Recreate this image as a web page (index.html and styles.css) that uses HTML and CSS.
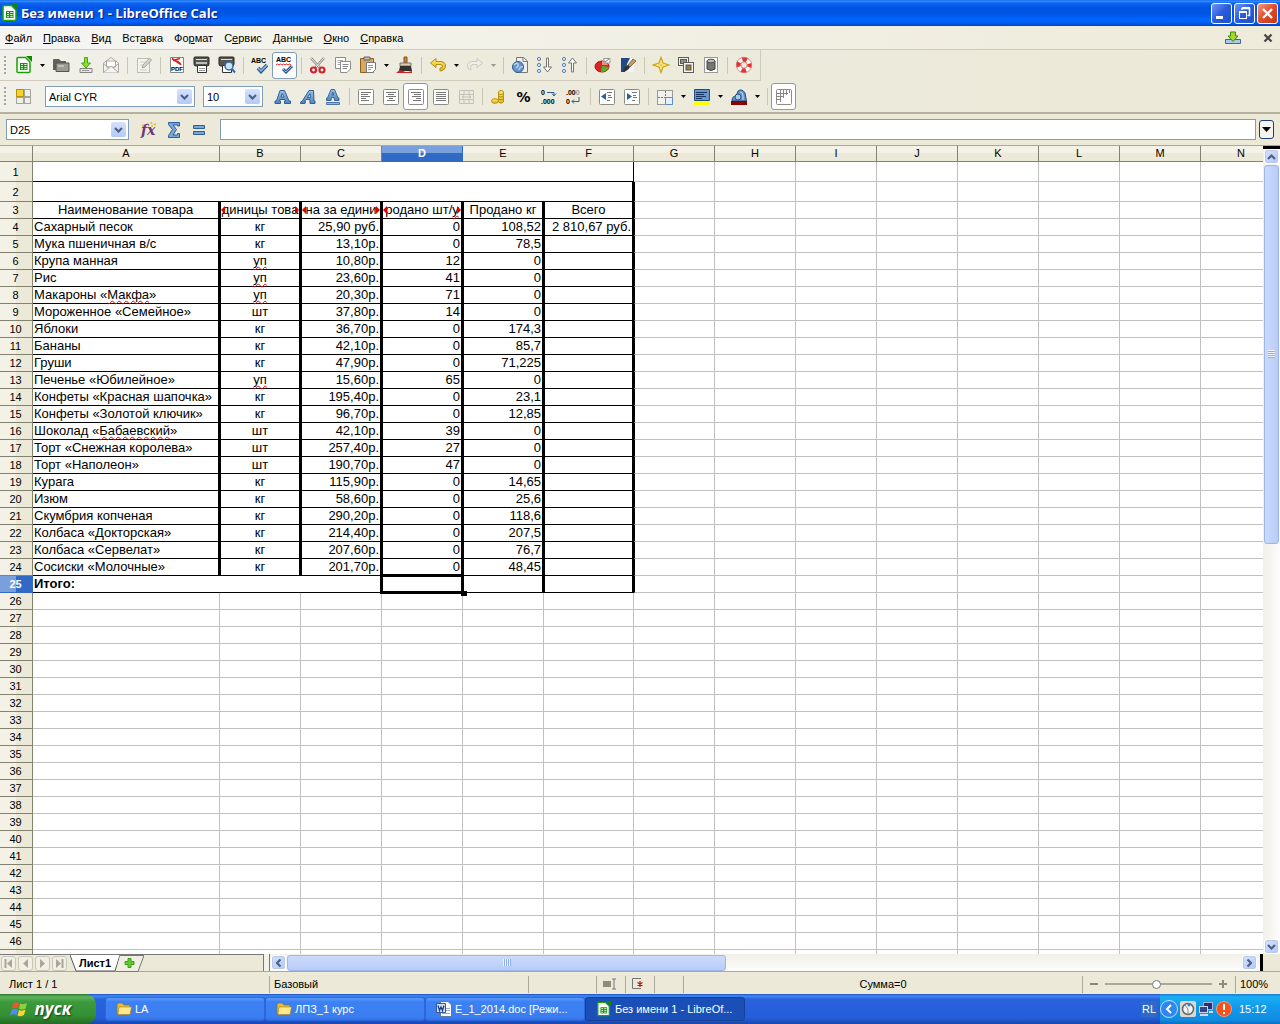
FILE: index.html
```html
<!DOCTYPE html>
<html lang="ru">
<head>
<meta charset="utf-8">
<title>Без имени 1 - LibreOffice Calc</title>
<link rel="stylesheet" href="styles.css">
</head>
<body>
<svg class="defs" aria-hidden="true">
  <defs>
    <linearGradient id="blueA" x1="0" y1="0" x2="0" y2="1"><stop offset="0" stop-color="#9dc0e4"/><stop offset="1" stop-color="#4f86bf"/></linearGradient>
    <linearGradient id="gold" x1="0" y1="0" x2="0" y2="1"><stop offset="0" stop-color="#ffeb6b"/><stop offset="1" stop-color="#e0b41c"/></linearGradient>
    <symbol id="calc" viewBox="0 0 18 18">
      <path d="M3 1.500H10.500L15 6V15.500Q15 16.500 14 16.500H3Q2 16.500 2 15.500V2.500Q2 1.500 3 1.500Z" fill="#fff" stroke="#18a303" stroke-width="1.500"/>
      <path d="M11 0H17V6Z" fill="#0f8a00"/>
      <path d="M5 7H12.500V14H5Z" fill="#18920a"/>
      <path d="M6 8.500H8M9.200 8.500H11.700M6 10.600H8M9.200 10.600H11.700M6 12.700H8M9.200 12.700H11.700" stroke="#e4f7df" stroke-width="1"/>
    </symbol>
    <symbol id="folder" viewBox="0 0 16 14">
      <path d="M1 3Q1 1 3 1H6L8 3H13Q14 3 14 4V12H2Q1 12 1 11Z" fill="#e8b93a" stroke="#8c6a12" stroke-width=".6"/>
      <path d="M3 5H15.500L14 12.500H2Z" fill="#ffe88a" stroke="#a8821c" stroke-width=".6"/>
    </symbol>
    <symbol id="caret" viewBox="0 0 5 3"><path d="M0 0H5L2.500 3Z"/></symbol>
    <symbol id="chev" viewBox="0 0 9 6"><path d="M1 1L4.500 4.500L8 1" fill="none" stroke="#4d6185" stroke-width="2.200"/></symbol>
    <symbol id="page" viewBox="0 0 18 18"><rect x="1.500" y="1.500" width="15" height="15" rx="1" fill="#fff" stroke="#8d8d88"/></symbol>
  </defs>
</svg>

<header class="titlebar">
  <svg class="app-icon" width="18" height="18"><use href="#calc"/></svg>
  <h1>Без имени 1 - LibreOffice Calc</h1>
  <div class="win-buttons">
    <button class="win" aria-label="Свернуть"><svg width="19" height="19"><path d="M4 13.500H11" stroke="#fff" stroke-width="3"/></svg></button>
    <button class="win" aria-label="Восстановить"><svg width="19" height="19" fill="none" stroke="#fff"><path d="M7 6V4.500H14.500V11.500H12.500" stroke-width="1.500"/><path d="M7 4H15" stroke-width="2"/><rect x="4.500" y="8" width="7" height="6.500"/><path d="M4 8H12" stroke-width="2"/></svg></button>
    <button class="win close" aria-label="Закрыть"><svg width="19" height="19"><path d="M5 5L14 14M14 5L5 14" stroke="#fff" stroke-width="2.400"/></svg></button>
  </div>
</header>

<nav class="menubar">
  <a href="#"><u>Ф</u>айл</a><a href="#"><u>П</u>равка</a><a href="#"><u>В</u>ид</a><a href="#">Вст<u>а</u>вка</a><a href="#">Фо<u>р</u>мат</a><a href="#">С<u>е</u>рвис</a><a href="#"><u>Д</u>анные</a><a href="#"><u>О</u>кно</a><a href="#"><u>С</u>правка</a>
  <div class="menu-right">
    <button class="plain" aria-label="Доступно обновление"><svg width="16" height="14"><path d="M.5 8.500H15.500V12.500H.5Z" fill="#a9cbe8" stroke="#3f6a8c"/><path d="M5.500 1H10.500V5H13L8 10.500L3 5H5.500Z" fill="#a6d92b" stroke="#3c8b0c"/></svg></button>
    <button class="plain" aria-label="Закрыть документ"><svg width="10" height="10"><path d="M1.500 1.500L8.500 8.500M8.500 1.500L1.500 8.500" stroke="#444" stroke-width="2.200"/></svg></button>
  </div>
</nav>

<div class="toolbars">
<div class="toolbar standard">
  <span class="grip"></span>
  <button class="tool" aria-label="Создать"><svg width="18" height="18"><use href="#calc"/></svg></button>
  <button class="drop" aria-label="Создать: варианты"><svg width="5" height="3"><use href="#caret"/></svg></button>
  <button class="tool" aria-label="Открыть"><svg width="18" height="18"><path d="M1 4Q1 3 2 3H7L9 5H14V14H1Z" fill="#62625c"/><path d="M4 7H17V15.500H4Z" fill="#9b9b92" stroke="#55554f"/><path d="M6 10H12" stroke="#e6e6df"/></svg></button>
  <button class="tool" aria-label="Сохранить"><svg width="18" height="18"><path d="M3 12.500H15V16.500H3Z" fill="#e6e6e2" stroke="#85857f"/><path d="M5 14.500H12" stroke="#999"/><path d="M7.500 1.500H10.500V7H13.500L9 12L4.500 7H7.500Z" fill="#8ade2c" stroke="#4aa50d"/></svg></button>
  <button class="tool" aria-label="Отправить по почте"><svg width="18" height="18" fill="#f4f4f1" stroke="#aaaaa4"><path d="M1.500 7L9 1.500L16.500 7V16.500H1.500Z"/><path d="M4.500 5H13.500V11H4.500Z" fill="#fff"/><path d="M1.500 7.500L7 12M16.500 7.500L11 12M1.500 16.500L9 10L16.500 16.500"/></svg></button>
  <span class="sep"></span>
  <button class="tool" aria-label="Правка файла"><svg width="18" height="18"><rect x="2.500" y="2.500" width="12" height="14" fill="#f4f4ef" stroke="#bcbcb4"/><path d="M5 6H10M5 9H8M5 14H12" stroke="#cdcdc6"/><path d="M7 12L8 9L14.500 2L16.500 4L10 11Z" fill="#d5d5cf" stroke="#a8a8a0"/></svg></button>
  <span class="sep"></span>
  <button class="tool" aria-label="Экспорт в PDF"><svg class="pdf" width="18" height="18"><path d="M2.500 1.500H15.500V16.500H2.500Z" fill="#fff" stroke="#85857f"/><path d="M4 2.500L13 8.500M12 2.500L5 4.500Q11 4.500 13 9" stroke="#d42222" stroke-width="1.600" fill="none"/><text x="3" y="15">PDF</text></svg></button>
  <button class="tool" aria-label="Печать"><svg width="18" height="18"><path d="M1 2Q1 1 2 1H15Q16 1 16 2V8Q16 10 14 10H3Q1 10 1 8Z" fill="#575751" stroke="#222"/><path d="M3 3.500H14" stroke="#ddd"/><path d="M3 7H14" stroke="#bbb" stroke-width="2"/><path d="M4.500 9.500H13.500V16.500H4.500Z" fill="#fff" stroke="#333"/><path d="M6 12.500H12M6 14.500H12" stroke="#999"/></svg></button>
  <button class="tool" aria-label="Предварительный просмотр"><svg width="18" height="18"><path d="M1 2Q1 1 2 1H15Q16 1 16 2V8Q16 10 14 10H3Q1 10 1 8Z" fill="#575751" stroke="#222"/><path d="M3 3.500H14" stroke="#ddd"/><path d="M4.500 9.500H13.500V16.500H4.500Z" fill="#fff" stroke="#333"/><circle cx="11" cy="10" r="4" fill="#cde1f5" stroke="#3769a4" stroke-width="1.500"/><path d="M14 13L17 16.500" stroke="#3769a4" stroke-width="2"/></svg></button>
  <span class="sep"></span>
  <button class="tool" aria-label="Проверка орфографии"><svg class="abc" width="18" height="18"><text x="0" y="7">ABC</text><path d="M7 12L10 15.500L16 9" fill="none" stroke="#31588c" stroke-width="3.500"/><path d="M7 12L10 15L16 9" fill="none" stroke="#8ab8ea" stroke-width="1.500"/></svg></button>
  <button class="tool pressed" aria-label="Автопроверка орфографии"><svg class="abc" width="18" height="18"><text x="0" y="6">ABC</text><path d="M0 9L1.500 8L3 9L4.500 8L6 9L7.500 8L9 9L10.500 8L12 9L13.500 8L15 9" stroke="#e02020" fill="none"/><path d="M7 13L10 16L16 10" fill="none" stroke="#31588c" stroke-width="3"/><path d="M7 13L10 16L16 10" fill="none" stroke="#8ab8ea"/></svg></button>
  <span class="sep"></span>
  <button class="tool" aria-label="Вырезать"><svg width="18" height="18"><path d="M2 2L11 12M15 2L6 12" stroke="#888882" stroke-width="2.500"/><path d="M2 2L11 12M15 2L6 12" stroke="#f2f2f0"/><circle cx="4.500" cy="14" r="2.500" fill="#fff" stroke="#d3202a" stroke-width="2.200"/><circle cx="13" cy="14" r="2.500" fill="#fff" stroke="#d3202a" stroke-width="2.200"/></svg></button>
  <button class="tool" aria-label="Копировать"><svg width="18" height="18" stroke="#8d8d88" fill="#fff"><path d="M1.500 1.500H11.500V12.500H1.500Z"/><path d="M3.500 4.500H9M3.500 6.500H8M3.500 8.500H7" stroke="#aaa"/><path d="M6.500 5.500H16.500V13L13 16.500H6.500Z"/><path d="M8.500 8.500H14.500M8.500 10.500H14M8.500 12.500H13" stroke="#888"/></svg></button>
  <button class="tool" aria-label="Вставить"><svg width="18" height="18"><path d="M1.500 2.500H14.500V16.500H1.500Z" fill="#d9a85c" stroke="#8c6020"/><path d="M5 1H11V4H5Z" fill="#bbb" stroke="#666"/><path d="M7.500 6.500H16.500V13.500L13.500 16.500H7.500Z" fill="#fff" stroke="#777"/><path d="M9 9.500H14M9 11.500H14M9 13.500H12" stroke="#999"/></svg></button>
  <button class="drop" aria-label="Вставить: варианты"><svg width="5" height="3"><use href="#caret"/></svg></button>
  <button class="tool" aria-label="Копировать форматирование"><svg width="18" height="18"><path d="M8 1H11V7H8Z" fill="#c78235" stroke="#8a531a"/><path d="M4 7H15V10H4Z" fill="#d8d0a8" stroke="#777"/><path d="M4 10H15L16 15H3Z" fill="#33332f"/><path d="M0 17Q4 13 7 15T16 15V17Z" fill="#cf2029"/></svg></button>
  <span class="sep"></span>
  <button class="tool" aria-label="Отменить"><svg width="18" height="18"><path d="M7 2.500V5.500H12Q16.500 6 16.500 10Q16 14.500 11 15V12Q13.500 12 13.500 10Q13.500 8.500 11 8.500H7V11.500L1.500 7Z" fill="url(#gold)" stroke="#b58e12"/></svg></button>
  <button class="drop" aria-label="Отменить: список"><svg width="5" height="3"><use href="#caret"/></svg></button>
  <button class="tool" aria-label="Вернуть" disabled><svg width="18" height="18"><path d="M11 2.500V5.500H6Q1.500 6 1.500 10Q2 14 5 14Q3.500 8.500 7 8.500H11V11.500L16.500 7Z" fill="#efefea" stroke="#c9c9c2"/></svg></button>
  <button class="drop" aria-label="Вернуть: список" disabled><svg width="5" height="3"><use href="#caret"/></svg></button>
  <span class="sep"></span>
  <button class="tool" aria-label="Гиперссылка"><svg width="18" height="18"><path d="M5.500 1.500H12.500L16.500 5V16.500H5.500Z" fill="#eee" stroke="#777"/><path d="M12 2V5.500H16" fill="#fff" stroke="#777"/><circle cx="7" cy="11" r="5.500" fill="#6795cb" stroke="#31598d"/><path d="M3 9Q6 6 7 8T5 12M8 14Q9 10 12 11" stroke="#b5d0ed" stroke-width="1.500" fill="none"/></svg></button>
  <button class="tool" aria-label="Сортировка по возрастанию"><svg width="18" height="18" fill="none"><g stroke="#4f84bd"><circle cx="3" cy="3" r="1.600"/><circle cx="3" cy="9" r="1.600"/><circle cx="3" cy="15" r="1.600"/></g><path d="M10.500 2H12.500V11H15.500L11.500 16L7.500 11H10.500Z" fill="#f7f7f4" stroke="#777"/></svg></button>
  <button class="tool" aria-label="Сортировка по убыванию"><svg width="18" height="18" fill="none"><g stroke="#4f84bd"><circle cx="3" cy="3" r="1.600"/><circle cx="3" cy="9" r="1.600"/><circle cx="3" cy="15" r="1.600"/></g><path d="M10.500 16H12.500V7H15.500L11.500 2L7.500 7H10.500Z" fill="#f7f7f4" stroke="#777"/></svg></button>
  <span class="sep"></span>
  <button class="tool" aria-label="Диаграмма"><svg width="18" height="18"><ellipse cx="8" cy="10.500" rx="7" ry="5.500" fill="#d82626" stroke="#a01010"/><path d="M8 10L15 11Q13 16 7 16Z" fill="#4cb52a"/><path d="M8 9V5Q12 5 14 9Z" fill="#ff8a7a"/><path d="M9.500 2.500H16V7H11Z" fill="#fff" stroke="#999"/><path d="M11 6L15 3" stroke="#777"/></svg></button>
  <button class="tool" aria-label="Функции рисования"><svg width="18" height="18"><path d="M2 2H13L15 16H2Z" fill="#25518c"/><path d="M9 2H15V16H6Z" fill="#f1f4f8"/><path d="M2 2H11L4 16H2Z" fill="#1f4a86"/><path d="M9 9L14 3L17 5L11 11Z" fill="#c99a66" stroke="#6d4a26" stroke-width=".7"/><path d="M4 16Q5 10 9 9L11 11Q9 15 4 16Z" fill="#333"/></svg></button>
  <span class="sep"></span>
  <button class="tool" aria-label="Навигатор"><svg width="18" height="18"><path d="M9 1.500L11 7L16.500 9L11 11L9 16.500L7 11L1.500 9L7 7Z" fill="#fff6a0" stroke="#d1a510" stroke-width="1.300"/><path d="M9 6V12M6 9H12" stroke="#d1a510" stroke-width=".6"/></svg></button>
  <button class="tool" aria-label="Галерея"><svg width="18" height="18" stroke="#5d5d58"><rect x="1.500" y="1.500" width="10" height="8" fill="#eee"/><rect x="3.500" y="3.500" width="6" height="4" fill="#8f8f86"/><rect x="6.500" y="6.500" width="10" height="10" fill="#f4f4f0"/><rect x="9" y="9" width="5" height="5" fill="#a07c3c" stroke="#555"/></svg></button>
  <button class="tool" aria-label="Источники данных"><svg width="18" height="18"><rect x="2.500" y="1.500" width="13" height="15" fill="#fff" stroke="#999"/><path d="M5 5V13Q9 16 13 13V5Z" fill="#77776f" stroke="#444"/><ellipse cx="9" cy="5" rx="4" ry="1.800" fill="#bbb" stroke="#555"/></svg></button>
  <span class="sep"></span>
  <button class="tool" aria-label="Справка"><svg width="18" height="18" fill="none"><circle cx="9" cy="9" r="5.500" stroke="#fff" stroke-width="4.500"/><circle cx="9" cy="9" r="5.500" stroke="#e2332e" stroke-width="4.500" stroke-dasharray="4.600 4.040" stroke-dashoffset="2.300"/><circle cx="9" cy="9" r="7.700" stroke="#d46d68" stroke-width=".8"/><circle cx="9" cy="9" r="3.200" stroke="#d46d68" stroke-width=".8"/></svg></button>
</div>

<div class="toolbar formatting">
  <span class="grip"></span>
  <button class="tool" aria-label="Стили"><svg width="18" height="18" stroke="#a5a59d" fill="#eeeeea"><rect x="1.500" y="1.500" width="7" height="7" fill="#f5d327" stroke="#b8920e"/><rect x="9.500" y="1.500" width="6" height="7"/><rect x="1.500" y="9.500" width="7" height="6"/><rect x="9.500" y="9.500" width="6" height="6"/></svg></button>
  <span class="combo font-name"><select aria-label="Гарнитура"><option>Arial CYR</option></select><i><svg width="9" height="6"><use href="#chev"/></svg></i></span>
  <span class="combo font-size"><select aria-label="Кегль"><option>10</option></select><i><svg width="9" height="6"><use href="#chev"/></svg></i></span>
  <button class="tool" aria-label="Полужирный"><svg width="18" height="18"><path fill-rule="evenodd" d="M6 2.500H10.500L15 13H16.500V15.500H10.500V13H11.500L11 11.500H6L5.500 13H6.500V15.500H1V13H2.500ZM8.300 5.500L7 9H10Z" fill="url(#blueA)" stroke="#2e5f97"/></svg></button>
  <button class="tool" aria-label="Курсив"><svg width="18" height="18"><path fill-rule="evenodd" d="M10 2.500H14.500L15 13H16V15.500H11V11.500H7L5.500 13.500H6.500L6 15.500H1.500L2 13.500H3ZM11 5.500L8.500 9.500H11.500Z" fill="url(#blueA)" stroke="#2e5f97"/></svg></button>
  <button class="tool" aria-label="Подчёркнутый"><svg width="18" height="18"><path fill-rule="evenodd" d="M7 1.500H10.500L14 10H15V12.500H10.500L10 9.500H7.500L7 12.500H2.500V10H3.500ZM8.800 4L8 7H9.800Z" fill="url(#blueA)" stroke="#2e5f97" stroke-width=".9"/><path d="M2.500 14.500H15.500V16.500H2.500Z" fill="#8fb8e2" stroke="#2e5f97" stroke-width=".8"/></svg></button>
  <span class="sep"></span>
  <button class="tool" aria-label="По левому краю"><svg width="18" height="18"><use href="#page"/><path d="M4 4.500H14M4 6.500H11M4 8.500H13M4 10.500H9M4 12.500H12" stroke="#777"/></svg></button>
  <button class="tool" aria-label="По центру"><svg width="18" height="18"><use href="#page"/><path d="M4 4.500H14M6 6.500H12M4 8.500H14M7 10.500H11M5 12.500H13" stroke="#777"/></svg></button>
  <button class="tool pressed" aria-label="По правому краю"><svg width="18" height="18"><use href="#page"/><path d="M4 4.500H14M7 6.500H14M5 8.500H14M9 10.500H14M6 12.500H14" stroke="#777"/></svg></button>
  <button class="tool" aria-label="По ширине"><svg width="18" height="18"><use href="#page"/><path d="M4 4.500H14M4 6.500H14M4 8.500H14M4 10.500H14M4 12.500H14" stroke="#777"/></svg></button>
  <button class="tool" aria-label="Объединить ячейки" disabled><svg width="18" height="18" fill="none" stroke="#c2c2ba"><path d="M2.500 2.500H16.500V15.500H2.500ZM2.500 6.500H16.500M2.500 11.500H16.500M7 2.500V6.500M12 2.500V6.500M7 11.500V15.500M12 11.500V15.500M5 9H14M7 7.500L5 9L7 10.500M12 7.500L14 9L12 10.500"/></svg></button>
  <span class="sep"></span>
  <button class="tool" aria-label="Денежный формат"><svg width="18" height="18" fill="url(#gold)" stroke="#b8920e"><path d="M8.500 3.500Q11 1 13.500 3.500V14Q11 16.500 8.500 14Z"/><path d="M8.500 6Q11 7 13.500 6M8.500 8.500Q11 9.500 13.500 8.500M8.500 11Q11 12 13.500 11"/><ellipse cx="5" cy="13" rx="3.500" ry="2.300"/></svg></button>
  <button class="tool percent" aria-label="Процентный формат">%</button>
  <button class="tool" aria-label="Добавить разряд"><svg class="num" width="18" height="18"><text x="1" y="7">0</text><text x="1" y="16">.000</text><path d="M7 4.500H14V7M12 5.500L14 8L16 5.500" fill="none" stroke="#2e5f97"/></svg></button>
  <button class="tool" aria-label="Удалить разряд"><svg class="num" width="18" height="18"><text x="1" y="7">.00<tspan fill="#999">0</tspan></text><text x="1" y="16">0</text><path d="M14 9V13.500H7M9 11.500L7 13.500L9 15.500" fill="none" stroke="#2e5f97"/></svg></button>
  <span class="sep"></span>
  <button class="tool" aria-label="Уменьшить отступ"><svg width="18" height="18"><use href="#page"/><path d="M9 4.500H14M10 7.500H13M10 9.500H14M9 12.500H12" stroke="#777"/><path d="M8 5V12L3 8.500Z" fill="#2861a5"/></svg></button>
  <button class="tool" aria-label="Увеличить отступ"><svg width="18" height="18"><use href="#page"/><path d="M9 4.500H14M10 7.500H13M10 9.500H14M9 12.500H12" stroke="#777"/><path d="M4 5V12L9 8.500Z" fill="#2861a5"/></svg></button>
  <span class="sep"></span>
  <button class="tool" aria-label="Обрамление"><svg width="18" height="18"><rect x="1.500" y="2.500" width="15" height="14" fill="#f1f1ed" stroke="#999"/><path d="M9.500 3V9.500H2" stroke="#777" stroke-dasharray="2 1" fill="none"/><path d="M9.500 16.500V9.500H16.500V16.500Z" fill="#e7eff8" stroke="#5d8fc6"/></svg></button>
  <button class="drop" aria-label="Обрамление: варианты"><svg width="5" height="3"><use href="#caret"/></svg></button>
  <button class="tool" aria-label="Цвет фона"><svg width="18" height="18"><path d="M1.500 1.500H16.500V12.500H1.500Z" fill="#6796cc" stroke="#264d7e"/><path d="M3 4.500H14M3 6.500H11M3 8.500H13M3 10.500H9" stroke="#16355f"/><path d="M1 13H17V17H1Z" fill="#ff0"/></svg></button>
  <button class="drop" aria-label="Цвет фона: варианты"><svg width="5" height="3"><use href="#caret"/></svg></button>
  <button class="tool" aria-label="Цвет шрифта"><svg width="18" height="18"><path d="M2 13Q2 8 6 8L8 3Q12 0 15 5L16.500 13Z" fill="#5e8fc6" stroke="#28528a"/><circle cx="8" cy="9" r="3" fill="#a9c9ea" stroke="#28528a"/><path d="M10 4Q13 4 13 8V12" stroke="#cfe2f5" fill="none"/><path d="M1 13H17V17H1Z" fill="#8b0000"/></svg></button>
  <button class="drop" aria-label="Цвет шрифта: варианты"><svg width="5" height="3"><use href="#caret"/></svg></button>
  <span class="sep"></span>
  <button class="tool pressed" aria-label="Линии сетки"><svg width="18" height="18"><use href="#page"/><path d="M2 5.500H13M2 8.500H9M2 11.500H6M5.500 2V14M8.500 2V10M11.500 2V7M14.500 2V5" stroke="#888"/></svg></button>
</div>
</div>

<div class="formula-bar">
  <span class="combo name-box"><input type="text" value="D25" aria-label="Поле имени"><i><svg width="9" height="6"><use href="#chev"/></svg></i></span>
  <div class="formula-tools">
    <button class="tool" aria-label="Мастер функций"><svg class="fx" width="18" height="18"><text x="1" y="14">fx</text><path d="M2 5L4 4M7 2L8 3M11 1L12 3M14 4L16 3M11 5H13" stroke="#e6bd20" stroke-width="1.500"/></svg></button>
    <button class="tool" aria-label="Сумма"><svg width="18" height="18"><path d="M3.500 1.500H14.500V5H12.500V4H8L11.500 8.500L8 14H12.500V12.500H14.500V16.500H3.500V14.500L7.500 8.500L3.500 3.500Z" fill="#78a7da" stroke="#2e5f97"/></svg></button>
    <button class="tool" aria-label="Формула"><svg width="18" height="18"><path d="M3.500 4.500H14.500V7.500H3.500ZM3.500 10.500H14.500V13.500H3.500Z" fill="#78a7da" stroke="#2e5f97"/></svg></button>
  </div>
  <input class="formula" type="text" aria-label="Строка ввода">
  <button class="expand" aria-label="Развернуть строку ввода"><svg width="9" height="5" viewBox="0 0 9 5"><path d="M0 0H9L4.500 5Z"/></svg></button>
</div>

<main class="workspace">
  <div class="sheet">
    <table class="grid">
      <colgroup><col class="c-num"><col class="c-a"><col class="c-std"><col class="c-std"><col class="c-std"><col class="c-std"><col class="c-f"><col class="c-std"><col class="c-std"><col class="c-std"><col class="c-std"><col class="c-std"><col class="c-std"><col class="c-std"><col class="c-std"></colgroup>
      <thead><tr><th></th><th>A</th><th>B</th><th>C</th><th class="sel">D</th><th>E</th><th>F</th><th>G</th><th>H</th><th>I</th><th>J</th><th>K</th><th>L</th><th>M</th><th>N</th></tr></thead>
      <tbody id="rows"></tbody>
    </table>
  </div>
  <div class="vscroll">
    <button class="sb up" aria-label="Вверх"><svg width="9" height="6"><use href="#chev"/></svg></button>
    <div class="track"><div class="thumb"><span class="ridges"></span></div></div>
    <button class="sb" aria-label="Вниз"><svg width="9" height="6"><use href="#chev"/></svg></button>
  </div>
</main>

<div class="sheet-bar">
  <div class="tabs">
    <button class="nav" aria-label="Первый лист"><svg width="9" height="9"><path d="M1.500 0V9" stroke="#aaa797" stroke-width="2"/><path d="M8 0V9L3 4.500Z"/></svg></button>
    <button class="nav" aria-label="Предыдущий лист"><svg width="9" height="9"><path d="M7 0V9L2 4.500Z"/></svg></button>
    <button class="nav" aria-label="Следующий лист"><svg width="9" height="9"><path d="M2 0V9L7 4.500Z"/></svg></button>
    <button class="nav" aria-label="Последний лист"><svg width="9" height="9"><path d="M7.500 0V9" stroke="#aaa797" stroke-width="2"/><path d="M1 0V9L6 4.500Z"/></svg></button>
    <button class="tab"><svg width="50" height="17"><path d="M0 0L6 16H45L50 0Z" fill="#fff"/><path d="M0 0L6 16H45L50 0" fill="none" stroke="#555"/></svg><span>Лист1</span></button>
    <button class="add" aria-label="Добавить лист"><svg width="28" height="17"><path d="M4 .5H28L22 16.500H0" fill="#f1efe4" stroke="#777"/><path d="M12 3.500H15V6.500H18V9.500H15V12.500H12V9.500H9V6.500H12Z" fill="#5fcf2c" stroke="#3f9f18"/></svg></button>
  </div>
  <div class="splitter"></div>
  <div class="hscroll">
    <button class="sb left" aria-label="Влево"><svg width="9" height="6"><use href="#chev"/></svg></button>
    <div class="track"><div class="thumb"><span class="ridges"></span></div></div>
    <button class="sb right" aria-label="Вправо"><svg width="9" height="6"><use href="#chev"/></svg></button>
  </div>
  <div class="corner"></div>
</div>

<div class="status">
  <span class="cell s-sheet">Лист 1 / 1</span>
  <span class="cell s-style">Базовый</span>
  <span class="cell s-lang"></span>
  <span class="cell s-icon"><svg width="14" height="12"><path d="M0 3H8V9H0Z" fill="#8d8a7c"/><path d="M9 1H13M9 11H13M11 1V11" stroke="#777"/></svg></span>
  <span class="cell s-icon"><svg width="14" height="12"><path d="M9 .5H.5V10.500H9" fill="none" stroke="#777"/><path d="M8 3V9M5.500 4.500L10.500 7.500M10.500 4.500L5.500 7.500" stroke="#b01818" stroke-width="1.200"/></svg></span>
  <span class="cell s-icon"></span>
  <span class="cell s-sum">Сумма=0</span>
  <span class="cell s-zoom"><button class="plain" aria-label="Мельче"><svg width="8" height="8"><path d="M0 4H8" stroke="#8d8a7c" stroke-width="2"/></svg></button><input type="range" min="0" max="100" value="48" aria-label="Масштаб"><button class="plain" aria-label="Крупнее"><svg width="8" height="8"><path d="M0 4H8M4 0V8" stroke="#8d8a7c" stroke-width="2"/></svg></button></span>
  <span class="cell s-pct">100%</span>
</div>

<footer class="taskbar">
  <button class="start"><svg width="19" height="18"><path d="M3 4Q6 1 9 3L8 8.500Q5 7 1.500 9Z" fill="#f0562a"/><path d="M10 3.500Q13 5 17 3L15.500 8.500Q12 10 9 9Z" fill="#8ed33a"/><path d="M1.500 10Q5 8 8 9.500L6.500 15Q3.500 13.500 0 15.500Z" fill="#4f8df5"/><path d="M9 10Q12 11.500 15.500 9.500L14 15Q11 17 7.500 15.500Z" fill="#fcd62e"/></svg><span>пуск</span></button>
  <div class="tasks">
    <button class="task"><svg width="16" height="14"><use href="#folder"/></svg><span>LA</span></button>
    <button class="task"><svg width="16" height="14"><use href="#folder"/></svg><span>ЛПЗ_1 курс</span></button>
    <button class="task"><svg width="16" height="16"><path d="M4.500 .5H12L15.500 4V15.500H4.500Z" fill="#fff" stroke="#5b78a8"/><path d="M10 7.500H14M10 9.500H14M6 12.500H14" stroke="#9ab"/><path d="M.5 2.500H9.500V11.500H.5Z" fill="#d6e2f5" stroke="#31579f"/><path d="M2 4.500L3.500 9.500L5 6L6.500 9.500L8 4.500" fill="none" stroke="#1d3f8c" stroke-width="1.300"/></svg><span>E_1_2014.doc [Режи...</span></button>
    <button class="task active"><svg width="16" height="16"><use href="#calc"/></svg><span>Без имени 1 - LibreOf...</span></button>
  </div>
  <span class="lang">RL</span>
  <div class="tray">
    <button class="hide" aria-label="Показать скрытые значки"><svg width="18" height="18"><circle cx="9" cy="9" r="8.500" fill="#2f86ee" stroke="#bfe0ff"/><path d="M11 5L7 9L11 13" fill="none" stroke="#fff" stroke-width="2"/></svg></button>
    <svg width="16" height="16"><rect width="16" height="16" rx="2" fill="#d8d8d4"/><circle cx="8" cy="8" r="5.500" fill="#f5f5f5" stroke="#666" stroke-width="1.500"/><path d="M8 8L5 4M8 8V13" stroke="#888"/><circle cx="9" cy="4" r="1.500" fill="#3a80e0"/></svg>
    <svg width="16" height="16"><rect x="5.500" y="1.500" width="9" height="7" fill="#26316f" stroke="#aab4d8"/><rect x="1.500" y="5.500" width="8" height="6" fill="#38458c" stroke="#ccd3ea"/><path d="M2 14H10M11 11H15" stroke="#d5d9ea" stroke-width="2"/></svg>
    <svg width="16" height="16"><circle cx="8" cy="8" r="7.500" fill="#f4541c" stroke="#ff9a6b"/><path d="M8 3V9M8 11V13" stroke="#fff" stroke-width="2"/></svg>
    <span class="clock">15:12</span>
  </div>
</footer>
<script src="sheet.js"></script>
</body>
</html>
```
FILE: styles.css
```css
* { box-sizing: border-box; }

:root {
  --face: #ece9d8;
  --line: #aca899;
  --field: #7f9db9;
}

body {
  margin: 0;
  height: 100vh;
  display: flex;
  flex-direction: column;
  overflow: hidden;
  background: var(--face);
  color: #000;
  font: 11px/16px "Liberation Sans", sans-serif;
}

button, input, select { font: inherit; color: inherit; margin: 0; padding: 0; border: 0; background: none; }
button { display: flex; align-items: center; justify-content: center; }
svg { display: block; flex: none; }
.defs { position: absolute; width: 0; height: 0; }

/* Title bar */
.titlebar {
  flex: none;
  height: 26px;
  display: flex;
  align-items: center;
  padding: 0 2px 0 1px;
  background: linear-gradient(#0a5ce8 0, #3a93ff 1px, #0a64f0 3px, #0054e3 8px, #0055e5 14px, #0066ff 20px, #0062f8 22px, #0042c8 26px);
}
.titlebar h1 { margin: 0 auto 0 2px; color: #fff; font: bold 13px/18px "Open Sans", sans-serif; text-shadow: 1px 1px 1px #0a1883; white-space: nowrap; }
.win-buttons { display: flex; gap: 2px; }
.win { width: 21px; height: 21px; border: 1px solid #fff; border-radius: 3px; background: linear-gradient(135deg, #6f95f0, #2a5bdf 50%, #1f50d0); }
.win.close { background: linear-gradient(135deg, #f09a80, #e0492a 50%, #c33a14); }

/* Menu */
.menubar {
  flex: none;
  height: 24px;
  display: flex;
  align-items: center;
  gap: 11px;
  padding: 0 7px 0 5px;
  border-bottom: 1px solid #d0cbbb;
  background: linear-gradient(90deg, #f5f5f5, #f3f2ea 30%, #eeebda);
}
.menubar a { color: #000; text-decoration: none; white-space: nowrap; }
.menu-right { margin-left: auto; display: flex; align-items: center; gap: 22px; }

/* Toolbars */
.toolbars { flex: none; border-bottom: 2px solid #b5b19f; background: linear-gradient(90deg, #f1f0ea, #edebdd 35%, #ece9d8); }
.toolbar { display: flex; align-items: center; height: 31px; padding-left: 1px; }
.standard { width: max-content; padding-right: 4px; border: solid #d0cbbb; border-width: 0 1px 1px 0; }
.grip { width: 4px; height: 19px; margin: 0 3px; background: repeating-linear-gradient(#a8a595 0 2px, transparent 2px 4px) 0 0 / 2px 100% no-repeat; }
.tool { flex: none; width: 25px; height: 27px; border: 1px solid transparent; border-radius: 3px; }
.pressed { background: #fff; border-color: #7f9db9; }
.drop { flex: none; width: 12px; height: 25px; }
.drop:disabled { opacity: .35; }
.sep { flex: none; width: 8px; height: 17px; background: linear-gradient(#cac6b4, #cac6b4) center / 1px 100% no-repeat; }
.abc text { font: bold 7px "Liberation Sans", sans-serif; }
.num text { font: bold 7px "Liberation Sans", sans-serif; }
.pdf text { font: bold 6px "Liberation Sans", sans-serif; }
.fx text { font: italic bold 14px "DejaVu Serif", serif; fill: #6b3a7a; }
.percent { font: bold 14px/18px "DejaVu Sans", sans-serif; }

.combo { flex: none; display: flex; align-items: center; height: 21px; padding: 2px; border: 1px solid var(--field); background: #fff; }
.combo select, .combo input { appearance: none; flex: 1; min-width: 0; padding-left: 1px; outline: 0; }
.combo i { display: flex; align-items: center; justify-content: center; width: 15px; height: 15px; border-radius: 2px; background: linear-gradient(#d6e2fd, #b3c9f8); pointer-events: none; }
.font-name { width: 150px; margin: 0 8px 0 9px; }
.font-size { width: 60px; margin-right: 7px; }

/* Formula bar */
.formula-bar { flex: none; display: flex; align-items: center; height: 32px; padding: 0 6px; border-bottom: 1px solid var(--line); }
.name-box { width: 123px; }
.formula-tools { display: flex; margin: 0 9px 0 7px; }
.formula { flex: 1; min-width: 0; height: 21px; border: 1px solid var(--field); background: #fff; }
.expand { width: 15px; height: 19px; margin-left: 3px; border: 1px solid #1c3f6b; border-radius: 3px; background: #f4f3ee; }

/* Spreadsheet */
.workspace { flex: 1; min-height: 0; display: flex; }
.sheet { flex: 1; min-width: 0; overflow: hidden; background: #fff; }
.grid { width: 1282px; table-layout: fixed; border-collapse: separate; border-spacing: 0; line-height: 16px; }
.c-num { width: 33px; }
.c-a { width: 187px; }
.c-std { width: 81px; }
.c-f { width: 90px; }
.grid th, .grid td { position: relative; height: 17px; padding: 0 1px; border: solid #c0c0c0; border-width: 0 1px 1px 0; white-space: nowrap; }
.grid th { border-color: #83826f; font-weight: normal; font-size: 11px; }
.grid thead th { height: 16px; line-height: 15px; background: linear-gradient(#f4f1e6 50%, #ece9d8 50%); }
.grid tbody th { padding-right: 2px; background: linear-gradient(90deg, #f4f1e6 50%, #ece9d8 50%); }
.grid thead th.sel { color: #fff; font-weight: bold; background: linear-gradient(#7a9fdd 50%, #316ac5 50%); border-color: #316ac5; }
.grid tbody th.sel { color: #fff; font-weight: bold; background: linear-gradient(90deg, #7a9fdd 50%, #316ac5 50%); border-color: #316ac5; }
.grid tr.tall > * { height: 20px; }
.grid td { font-size: 13px; text-align: right; }
.grid td.ink { border-color: #000; }
.grid td.thick { border-right-width: 2px; }
.grid td.after { border-left: 1px solid #000; }
.grid td.left { text-align: left; }
.grid td.mid { text-align: center; }
.grid td.strong { font-weight: bold; }
.grid td.clip { padding: 0; }
.clip::before, .clip::after { content: ""; position: absolute; top: 4px; border: solid transparent; border-width: 4px 0; }
.clip::before { left: 0; border-right: 4px solid #d00; }
.clip::after { right: 0; border-left: 4px solid #d00; }
.typo { text-decoration: underline wavy #e00 1px; text-decoration-skip-ink: none; text-underline-offset: 1px; }
.cursor { position: absolute; z-index: 1; inset: -2px -2px -2px -2px; border: 3px solid #000; }
.cursor::after { content: ""; position: absolute; right: -6px; bottom: -5px; width: 6px; height: 5px; background: #000; }

/* Scroll bars */
.sb { flex: none; width: 15px; height: 15px; border: 1px solid #fff; border-radius: 3px; background: linear-gradient(135deg, #d6e2fd, #b3c9f8); box-shadow: 0 0 0 1px #b8c8ea inset; }
.up svg { transform: rotate(180deg); }
.left svg { transform: rotate(90deg); }
.right svg { transform: rotate(-90deg); }
.track { flex: 1; display: flex; }
.thumb { display: flex; align-items: center; justify-content: center; border: 1px solid #9db5e8; border-radius: 3px; background: #c5d5fb; }
.vscroll { width: 17px; display: flex; flex-direction: column; padding: 0 1px; border-top: 3px solid #000; background: linear-gradient(90deg, #f0efe8, #fdfdfb); }
.vscroll .track { flex-direction: column; padding: 1px 0; }
.vscroll .thumb { height: 49%; background: linear-gradient(90deg, #cbdafd, #b9ccf8); }
.vscroll .ridges { width: 7px; height: 8px; background: repeating-linear-gradient(#eef4fe 0 1px, #8cb0f8 1px 2px); }
.hscroll { flex: 1; display: flex; align-items: center; padding: 0 3px 0 1px; border-right: 3px solid #000; background: linear-gradient(#f0efe8, #fdfdfb); }
.hscroll .track { height: 16px; padding-left: 1px; }
.hscroll .thumb { width: 46%; background: linear-gradient(#cbdafd, #b9ccf8); }
.hscroll .ridges { width: 8px; height: 7px; background: repeating-linear-gradient(90deg, #eef4fe 0 1px, #8cb0f8 1px 2px); }

/* Sheet tabs */
.sheet-bar { flex: none; display: flex; height: 18px; border-bottom: 1px solid var(--line); }
.tabs { width: 264px; display: flex; align-items: center; gap: 2px; padding-left: 1px; border: solid #777; border-width: 1px 1px 0 0; }
.nav { width: 15px; height: 15px; border: 1px solid #c9c6b5; border-radius: 3px; background: #f2f0e6; fill: #aaa797; }
.tab { display: grid; margin: 0 -6px 0 1px; }
.tab > * { grid-area: 1 / 1; }
.tab span { font-weight: bold; }
.splitter { width: 6px; border-right: 1px solid #777; background: #f4f2e8; }
.corner { width: 17px; }

/* Status bar */
.status { flex: none; display: flex; align-items: center; height: 22px; padding-top: 2px; }
.cell { height: 17px; display: flex; align-items: center; border-right: 1px solid var(--line); padding-left: 4px; white-space: nowrap; }
.s-sheet { width: 270px; padding-left: 9px; }
.s-style { width: 259px; }
.s-lang { width: 68px; }
.s-icon { width: 29px; padding-left: 6px; }
.s-sum { flex: 1; justify-content: center; padding: 0; }
.s-zoom { width: 153px; gap: 7px; padding-left: 7px; }
.s-pct { width: 44px; border: 0; }
.s-zoom input { appearance: none; width: 107px; height: 9px; background: linear-gradient(#aca899, #aca899) center / 100% 2px no-repeat; }
.s-zoom input::-webkit-slider-thumb { appearance: none; width: 9px; height: 9px; border: 1px solid #777; border-radius: 50%; background: #fff; }

/* Task bar */
.taskbar { flex: none; display: flex; height: 30px; color: #fff; background: linear-gradient(#1f4fc0 0, #3f8cf3 2px, #2a62dc 5px, #245edb 24px, #1a46ad 30px); }
.start { width: 96px; gap: 5px; padding-right: 14px; border-radius: 0 10px 10px 0; background: linear-gradient(#2f7a30 0, #5eb35c 3px, #3c9a3c 8px, #338f33 22px, #236b25 30px); color: #fff; }
.start span { font: italic bold 17px/24px "Open Sans", sans-serif; text-shadow: 1px 1px 2px #123f12; }
.tasks { display: flex; align-items: center; flex: 1; min-width: 0; padding-left: 9px; }
.task { width: 160px; height: 24px; justify-content: flex-start; gap: 3px; padding-left: 10px; color: #fff; border: 1px solid #2c66dc; border-radius: 3px; background: linear-gradient(#5c9bfa, #3c81f3 4px, #3a7df0 20px, #2f6ee0); white-space: nowrap; }
.task.active { background: #1b4fb8; border-color: #163f96; }
.lang { align-self: center; padding: 0 1px; margin-right: 3px; background: #316ac5; }
.tray { display: flex; align-items: center; gap: 2px; width: 120px; background: linear-gradient(#1f7cd6 0, #19b0f2 3px, #129bee 12px, #0f8de0 26px, #0d6cc0 30px); }
.clock { margin-left: 5px; }
```
FILE: sheet.js
```js
const goods = [
  ['Сахарный песок', 'кг', '25,90 руб.', '0', '108,52', '2 810,67 руб.'],
  ['Мука пшеничная в/с', 'кг', '13,10р.', '0', '78,5'],
  ['Крупа манная', 'уп', '10,80р.', '12', '0'],
  ['Рис', 'уп', '23,60р.', '41', '0'],
  ['Макароны «<span class="typo">Макфа</span>»', 'уп', '20,30р.', '71', '0'],
  ['Мороженное «Семейное»', 'шт', '37,80р.', '14', '0'],
  ['Яблоки', 'кг', '36,70р.', '0', '174,3'],
  ['Бананы', 'кг', '42,10р.', '0', '85,7'],
  ['Груши', 'кг', '47,90р.', '0', '71,225'],
  ['Печенье «Юбилейное»', 'уп', '15,60р.', '65', '0'],
  ['Конфеты «Красная шапочка»', 'кг', '195,40р.', '0', '23,1'],
  ['Конфеты «Золотой ключик»', 'кг', '96,70р.', '0', '12,85'],
  ['Шоколад «<span class="typo">Бабаевский</span>»', 'шт', '42,10р.', '39', '0'],
  ['Торт «Снежная королева»', 'шт', '257,40р.', '27', '0'],
  ['Торт «Наполеон»', 'шт', '190,70р.', '47', '0'],
  ['Курага', 'кг', '115,90р.', '0', '14,65'],
  ['Изюм', 'кг', '58,60р.', '0', '25,6'],
  ['Скумбрия копченая', 'кг', '290,20р.', '0', '118,6'],
  ['Колбаса «Докторская»', 'кг', '214,40р.', '0', '207,5'],
  ['Колбаса «Сервелат»', 'кг', '207,60р.', '0', '76,7'],
  ['Сосиски «Молочные»', 'кг', '201,70р.', '0', '48,45'],
];

const LAST_ROW = 47;
const empty = (count) => '<td></td>'.repeat(count);

function goodsRow(item) {
  const unit = item[1] === 'уп' ? '<span class="typo">уп</span>' : item[1];
  return `<td class="ink thick left">${item[0]}</td>` +
    `<td class="ink thick after mid">${unit}</td>` +
    [2, 3, 4, 5].map((i) => `<td class="ink thick after">${item[i] || ''}</td>`).join('') +
    '<td class="after"></td>' + empty(7);
}

function cells(n) {
  if (n === 1) return '<td class="ink" colspan="6"></td>' + empty(8);
  if (n === 2) return '<td class="ink thick" colspan="6"></td><td class="after"></td>' + empty(7);
  if (n === 3) {
    // Headings wider than their column show only the part that fits.
    return '<td class="ink thick mid">Наименование товара</td>' +
      ['диницы това', 'на за едини', 'родано шт/<span class="typo">у</span>']
        .map((t) => `<td class="ink thick after mid clip">${t}</td>`).join('') +
      '<td class="ink thick after mid">Продано кг</td>' +
      '<td class="ink thick after mid">Всего</td><td class="after"></td>' + empty(7);
  }
  if (n <= 24) return goodsRow(goods[n - 4]);
  if (n === 25) {
    return '<td class="ink left strong" colspan="3">Итого:</td>' +
      '<td class="ink"><div class="cursor"></div></td><td class="ink thick"></td>' +
      '<td class="ink thick after"></td><td class="after"></td>' + empty(7);
  }
  return empty(14);
}

let html = '';
for (let n = 1; n <= LAST_ROW; n++) {
  const label = n < LAST_ROW ? n : '';
  html += `<tr${n < 3 ? ' class="tall"' : ''}><th${n === 25 ? ' class="sel"' : ''}>${label}</th>${cells(n)}</tr>`;
}
document.getElementById('rows').innerHTML = html;
```
